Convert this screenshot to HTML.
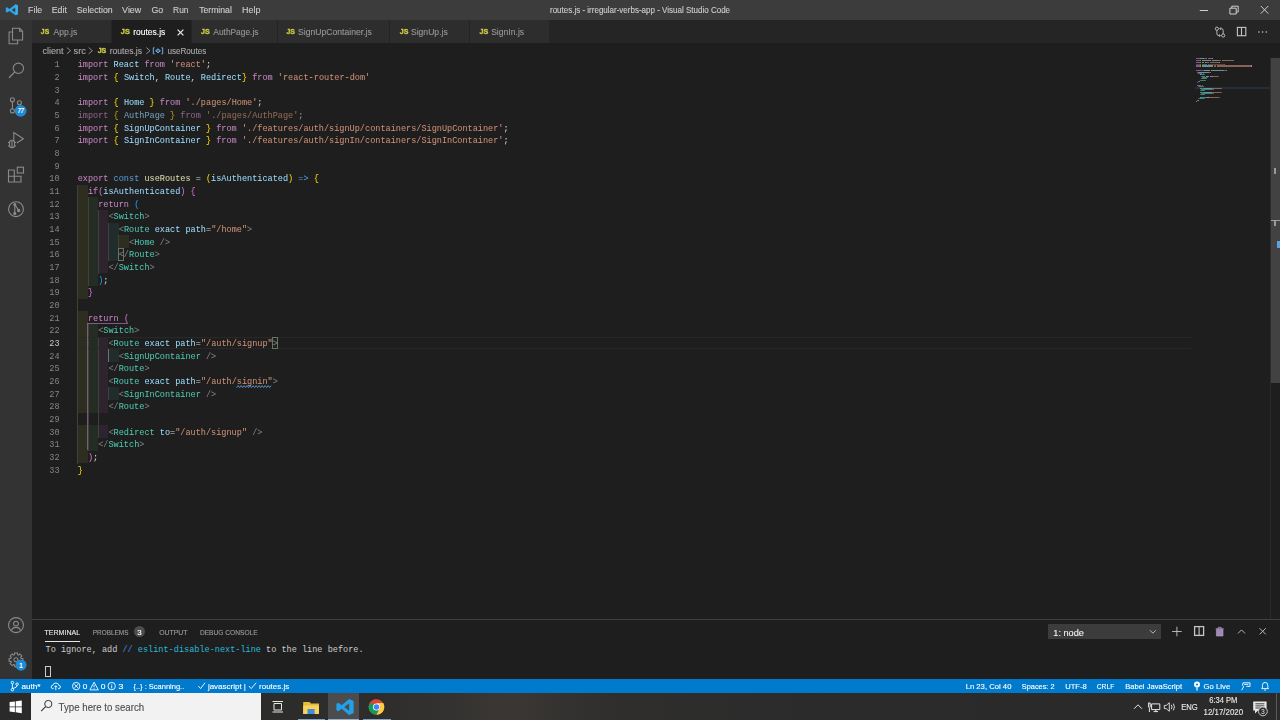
<!DOCTYPE html>
<html><head><meta charset="utf-8">
<style>
*{margin:0;padding:0;box-sizing:border-box}
html,body{width:1280px;height:720px;overflow:hidden;background:#1e1e1e;font-family:"Liberation Sans",sans-serif;position:relative}
.abs,.a{position:absolute}
#title{left:0;top:0;width:1280px;height:20px;background:#3c3c3c;color:#cccccc;font-size:8.7px}
#title .m{position:absolute;top:5px;line-height:10px}
#act{left:0;top:20px;width:32px;height:658.7px;background:#333333}
#tabs{left:32px;top:20px;width:1248px;height:23.3px;background:#252526}
.tab{position:absolute;top:0;height:23.3px;background:#2d2d2d;border-right:1px solid #252526;color:#8f8f8f;font-size:8.7px}
.tab.act{background:#1e1e1e;color:#ffffff}
.tab .js{position:absolute;top:7px;font-size:6.5px;font-weight:bold;color:#cbcb41;letter-spacing:-0.3px}
.tab .lb{position:absolute;top:6.5px;line-height:10px}
#crumbs{left:32px;top:43.3px;width:1248px;height:14.7px;background:#1e1e1e;color:#a9a9a9;font-size:8.7px}
.ln{position:absolute;left:32px;width:27.6px;text-align:right;color:#858585;font-family:"Liberation Mono",monospace;font-size:8.555px;line-height:12.667px;padding-top:1.3px}
.ln.cur{color:#c6c6c6}
.cl{-webkit-text-stroke:0.04px currentColor;position:absolute;left:77.7px;font-family:"Liberation Mono",monospace;font-size:8.555px;line-height:12.667px;white-space:pre;color:#d4d4d4;padding-top:1.3px}
.cl.dim{opacity:0.667}
.ig{position:absolute;width:1px;background:#404040}
.k{color:#C586C0}.s{color:#569CD6}.v{color:#9CDCFE}.f{color:#DCDCAA}.str{color:#CE9178}.p{color:#d4d4d4}.t{color:#4EC9B0}.g{color:#808080}
.b1{color:#FFD700}.b2{color:#DA70D6}.b3{color:#179FFF}
#panel{left:32px;top:619px;width:1248px;height:59.7px;background:#1e1e1e;border-top:1px solid #404040}
#status{left:0;top:678.7px;width:1280px;height:14.7px;background:#007acc;color:#fff;font-size:8.7px}
#taskbar{left:0;top:693.3px;width:1280px;height:26.7px;background:linear-gradient(90deg,#2a2a2a 0%,#2e2d2c 30%,#3a3734 40%,#2f2e2d 48%,#2b2b2b 65%,#2a2a2a 100%)}
.pt{top:627.5px;font-size:7.3px;line-height:9px;color:#9d9d9d;white-space:nowrap}
.term{font-family:"Liberation Mono",monospace;font-size:8.555px;line-height:12px;color:#cccccc;white-space:pre}
.st{top:681.3px;font-size:8.7px;line-height:10px;color:#ffffff;white-space:nowrap}
</style></head><body>
<div id="title" class="abs">
  <svg class="abs" style="left:0;top:0" width="1280" height="20" viewBox="0 0 1280 20">
    <path d="M15.5,4.3 L17.8,5.4 V14.2 L15.5,15.3 L9.4,10.9 L7.1,12.6 L5.8,12 V7.8 L7.1,7.2 L9.4,8.9 Z M15.5,7.4 L11.6,9.9 L15.5,12.4 Z" fill="#2ba6e8" fill-rule="evenodd"/>
    <path d="M15.5,4.3 L17.8,5.4 V14.2 L15.5,15.3 Z" fill="#3ab0f0"/>
    <path d="M1199.8,10.5 H1208" stroke="#cfcfcf" stroke-width="1"/>
    <path d="M1229.9,8.2 H1236.2 V14 H1229.9 Z M1231.8,8.2 V6.2 H1238.2 V12 H1236.2" fill="none" stroke="#cfcfcf" stroke-width="1"/>
    <path d="M1260.8,6 L1268.3,13.6 M1268.3,6 L1260.8,13.6" stroke="#cfcfcf" stroke-width="1"/>
  </svg>
</div>
<div id="act" class="abs"></div>
<svg class="abs" style="left:0;top:0" width="32" height="680" viewBox="0 0 32 680" fill="none" stroke="#8a8a8a" stroke-width="1.1">
  <!-- explorer -->
  <path d="M12.5,28.2 H19.6 L22.6,31.2 V40 H12.5 Z M19.6,28.2 V31.2 H22.6"/>
  <path d="M12.5,32 H9.1 V43.8 H17.6 V40"/>
  <!-- search -->
  <circle cx="18.4" cy="68.3" r="5.2"/>
  <path d="M14.6,72.1 L9,77.8" stroke-width="1.3"/>
  <!-- scm -->
  <circle cx="12.4" cy="99.8" r="2"/>
  <circle cx="19.4" cy="102.7" r="2"/>
  <circle cx="12.4" cy="110.9" r="2"/>
  <path d="M12.4,101.8 V108.9"/>
  <!-- debug -->
  <path d="M13.8,141 V132.6 L23.4,138.8 L16.8,143"/>
  <path d="M9.5,141.5 Q12,139 14.5,141.5 V146.5 Q12,149 9.5,146.5 Z M8,142.5 H9.5 M14.5,142.5 H16 M8,146 H9.5 M14.5,146 H16 M12,141 V148"/>
  <!-- extensions -->
  <path d="M8.5,170 H14.3 V176.3 H21 V182 H8.5 Z M8.5,176.3 H14.3 V182"/>
  <rect x="17.3" y="167.2" width="6.2" height="5.8"/>
  <!-- gitlens -->
  <circle cx="16" cy="209.2" r="7.4"/>
  <path d="M14.8,204.5 V213.4 M14.8,204.5 L18.7,210.5"/>
  <circle cx="14.8" cy="204.5" r="1" fill="#8a8a8a"/>
  <circle cx="18.7" cy="210.5" r="1.1" fill="#8a8a8a"/>
  <circle cx="14.8" cy="213.4" r="1" fill="#8a8a8a"/>
  <!-- account -->
  <circle cx="16" cy="625.1" r="7.5"/>
  <circle cx="16" cy="623.6" r="2.4"/>
  <path d="M11.6,630.4 Q12.3,627.4 16,627.4 Q19.7,627.4 20.4,630.4"/>
  <!-- gear -->
  <path d="M14.43,654.74 L14.61,652.94 L17.39,652.94 L17.57,654.74 L18.47,655.11 L19.87,653.97 L21.83,655.93 L20.69,657.33 L21.06,658.23 L22.86,658.41 L22.86,661.19 L21.06,661.37 L20.69,662.27 L21.83,663.67 L19.87,665.63 L18.47,664.49 L17.57,664.86 L17.39,666.66 L14.61,666.66 L14.43,664.86 L13.53,664.49 L12.13,665.63 L10.17,663.67 L11.31,662.27 L10.94,661.37 L9.14,661.19 L9.14,658.41 L10.94,658.23 L11.31,657.33 L10.17,655.93 L12.13,653.97 L13.53,655.11Z"/>
  <circle cx="16" cy="659.8" r="2"/>
  <!-- badges -->
  <circle cx="20.6" cy="110.8" r="5.9" fill="#1f8ad2" stroke="none"/>
  <circle cx="21" cy="665.1" r="5.6" fill="#1f8ad2" stroke="none"/>
  <text x="17.7" y="113.3" fill="#fff" stroke="none" font-family="Liberation Sans" font-size="6.6" font-weight="bold" font-style="italic" textLength="6.2" lengthAdjust="spacingAndGlyphs">77</text>
  <text x="21" y="667.6" fill="#fff" stroke="none" font-family="Liberation Sans" font-size="7" font-weight="bold" text-anchor="middle">1</text>
</svg>
<div id="tabs" class="abs">
  <div class="tab" style="left:0;width:80px"></div>
  <div class="tab act" style="left:80px;width:80px"><svg class="abs" style="left:65.2px;top:8.6px" width="7" height="7" viewBox="0 0 7 7"><path d="M0.6,0.6 L6.4,6.4 M6.4,0.6 L0.6,6.4" stroke="#e8e8e8" stroke-width="1.25"/></svg></div>
  <div class="tab" style="left:160px;width:85.5px"></div>
  <div class="tab" style="left:245.5px;width:112.5px"></div>
  <div class="tab" style="left:358px;width:80px"></div>
  <div class="tab" style="left:438px;width:80px"></div>
</div>
<div id="crumbs" class="abs"></div>
<svg class="abs" style="left:0;top:43px" width="300" height="15" viewBox="0 43 300 15" fill="none" stroke="#9a9a9a" stroke-width="0.9">
  <path d="M66.9,47.6 L70.6,50.7 L66.9,53.8 M88.7,47.6 L92.4,50.7 L88.7,53.8 M146.3,47.6 L150,50.7 L146.3,53.8"/>
  <path d="M154.6,47.8 H153.3 V53.8 H154.6 M161.4,47.8 H162.7 V53.8 H161.4" stroke="#75beff"/>
  <path d="M155.6,50.8 L158,48.8 L160.4,50.8 L158,52.8 Z" stroke="#75beff" fill="#75beff" fill-opacity="0.4"/>
</svg>
<svg class="abs" style="left:1200px;top:20px" width="80" height="23" viewBox="1200 20 80 23" fill="none" stroke="#c5c5c5" stroke-width="0.9">
  <circle cx="1216.9" cy="28.7" r="1.6"/>
  <circle cx="1223.2" cy="35.5" r="1.6"/>
  <path d="M1216.9,30.3 V33.6 Q1216.9,35.6 1218.9,35.6 H1220.4 M1219.2,34.4 L1220.4,35.6 L1219.2,36.8"/>
  <path d="M1223.2,33.9 V30.6 Q1223.2,28.6 1221.2,28.6 H1219.8 M1221,27.4 L1219.8,28.6 L1221,29.8"/>
  <rect x="1237.4" y="27.4" width="8.4" height="8.3" stroke-width="1.1"/>
  <path d="M1241.5,27.4 V35.7" stroke-width="1.1"/>
  <circle cx="1258.9" cy="32" r="0.8" fill="#c5c5c5" stroke="none"/>
  <circle cx="1262.6" cy="32" r="0.8" fill="#c5c5c5" stroke="none"/>
  <circle cx="1266.3" cy="32" r="0.8" fill="#c5c5c5" stroke="none"/>
</svg>
<div class="a" style="left:77.70px;top:184.67px;width:10.27px;height:12.67px;background:rgba(255,255,64,0.07)"></div>
<div class="a" style="left:77.70px;top:197.33px;width:10.27px;height:12.67px;background:rgba(255,255,64,0.07)"></div>
<div class="a" style="left:87.97px;top:197.33px;width:10.27px;height:12.67px;background:rgba(127,255,127,0.07)"></div>
<div class="a" style="left:77.70px;top:210.00px;width:10.27px;height:12.67px;background:rgba(255,255,64,0.07)"></div>
<div class="a" style="left:87.97px;top:210.00px;width:10.27px;height:12.67px;background:rgba(127,255,127,0.07)"></div>
<div class="a" style="left:98.23px;top:210.00px;width:10.27px;height:12.67px;background:rgba(255,127,255,0.07)"></div>
<div class="a" style="left:77.70px;top:222.67px;width:10.27px;height:12.67px;background:rgba(255,255,64,0.07)"></div>
<div class="a" style="left:87.97px;top:222.67px;width:10.27px;height:12.67px;background:rgba(127,255,127,0.07)"></div>
<div class="a" style="left:98.23px;top:222.67px;width:10.27px;height:12.67px;background:rgba(255,127,255,0.07)"></div>
<div class="a" style="left:108.50px;top:222.67px;width:10.27px;height:12.67px;background:rgba(79,236,236,0.07)"></div>
<div class="a" style="left:77.70px;top:235.33px;width:10.27px;height:12.67px;background:rgba(255,255,64,0.07)"></div>
<div class="a" style="left:87.97px;top:235.33px;width:10.27px;height:12.67px;background:rgba(127,255,127,0.07)"></div>
<div class="a" style="left:98.23px;top:235.33px;width:10.27px;height:12.67px;background:rgba(255,127,255,0.07)"></div>
<div class="a" style="left:108.50px;top:235.33px;width:10.27px;height:12.67px;background:rgba(79,236,236,0.07)"></div>
<div class="a" style="left:118.77px;top:235.33px;width:10.27px;height:12.67px;background:rgba(255,255,64,0.07)"></div>
<div class="a" style="left:77.70px;top:248.00px;width:10.27px;height:12.67px;background:rgba(255,255,64,0.07)"></div>
<div class="a" style="left:87.97px;top:248.00px;width:10.27px;height:12.67px;background:rgba(127,255,127,0.07)"></div>
<div class="a" style="left:98.23px;top:248.00px;width:10.27px;height:12.67px;background:rgba(255,127,255,0.07)"></div>
<div class="a" style="left:108.50px;top:248.00px;width:10.27px;height:12.67px;background:rgba(79,236,236,0.07)"></div>
<div class="a" style="left:77.70px;top:260.67px;width:10.27px;height:12.67px;background:rgba(255,255,64,0.07)"></div>
<div class="a" style="left:87.97px;top:260.67px;width:10.27px;height:12.67px;background:rgba(127,255,127,0.07)"></div>
<div class="a" style="left:98.23px;top:260.67px;width:10.27px;height:12.67px;background:rgba(255,127,255,0.07)"></div>
<div class="a" style="left:77.70px;top:273.33px;width:10.27px;height:12.67px;background:rgba(255,255,64,0.07)"></div>
<div class="a" style="left:87.97px;top:273.33px;width:10.27px;height:12.67px;background:rgba(127,255,127,0.07)"></div>
<div class="a" style="left:77.70px;top:286.00px;width:10.27px;height:12.67px;background:rgba(255,255,64,0.07)"></div>
<div class="a" style="left:77.70px;top:311.33px;width:10.27px;height:12.67px;background:rgba(255,255,64,0.07)"></div>
<div class="a" style="left:77.70px;top:324.00px;width:10.27px;height:12.67px;background:rgba(255,255,64,0.07)"></div>
<div class="a" style="left:87.97px;top:324.00px;width:10.27px;height:12.67px;background:rgba(127,255,127,0.07)"></div>
<div class="a" style="left:77.70px;top:336.67px;width:10.27px;height:12.67px;background:rgba(255,255,64,0.07)"></div>
<div class="a" style="left:87.97px;top:336.67px;width:10.27px;height:12.67px;background:rgba(127,255,127,0.07)"></div>
<div class="a" style="left:98.23px;top:336.67px;width:10.27px;height:12.67px;background:rgba(255,127,255,0.07)"></div>
<div class="a" style="left:77.70px;top:349.33px;width:10.27px;height:12.67px;background:rgba(255,255,64,0.07)"></div>
<div class="a" style="left:87.97px;top:349.33px;width:10.27px;height:12.67px;background:rgba(127,255,127,0.07)"></div>
<div class="a" style="left:98.23px;top:349.33px;width:10.27px;height:12.67px;background:rgba(255,127,255,0.07)"></div>
<div class="a" style="left:108.50px;top:349.33px;width:10.27px;height:12.67px;background:rgba(79,236,236,0.07)"></div>
<div class="a" style="left:77.70px;top:362.00px;width:10.27px;height:12.67px;background:rgba(255,255,64,0.07)"></div>
<div class="a" style="left:87.97px;top:362.00px;width:10.27px;height:12.67px;background:rgba(127,255,127,0.07)"></div>
<div class="a" style="left:98.23px;top:362.00px;width:10.27px;height:12.67px;background:rgba(255,127,255,0.07)"></div>
<div class="a" style="left:77.70px;top:374.67px;width:10.27px;height:12.67px;background:rgba(255,255,64,0.07)"></div>
<div class="a" style="left:87.97px;top:374.67px;width:10.27px;height:12.67px;background:rgba(127,255,127,0.07)"></div>
<div class="a" style="left:98.23px;top:374.67px;width:10.27px;height:12.67px;background:rgba(255,127,255,0.07)"></div>
<div class="a" style="left:77.70px;top:387.33px;width:10.27px;height:12.67px;background:rgba(255,255,64,0.07)"></div>
<div class="a" style="left:87.97px;top:387.33px;width:10.27px;height:12.67px;background:rgba(127,255,127,0.07)"></div>
<div class="a" style="left:98.23px;top:387.33px;width:10.27px;height:12.67px;background:rgba(255,127,255,0.07)"></div>
<div class="a" style="left:108.50px;top:387.33px;width:10.27px;height:12.67px;background:rgba(79,236,236,0.07)"></div>
<div class="a" style="left:77.70px;top:400.00px;width:10.27px;height:12.67px;background:rgba(255,255,64,0.07)"></div>
<div class="a" style="left:87.97px;top:400.00px;width:10.27px;height:12.67px;background:rgba(127,255,127,0.07)"></div>
<div class="a" style="left:98.23px;top:400.00px;width:10.27px;height:12.67px;background:rgba(255,127,255,0.07)"></div>
<div class="a" style="left:77.70px;top:425.33px;width:10.27px;height:12.67px;background:rgba(255,255,64,0.07)"></div>
<div class="a" style="left:87.97px;top:425.33px;width:10.27px;height:12.67px;background:rgba(127,255,127,0.07)"></div>
<div class="a" style="left:98.23px;top:425.33px;width:10.27px;height:12.67px;background:rgba(255,127,255,0.07)"></div>
<div class="a" style="left:77.70px;top:438.00px;width:10.27px;height:12.67px;background:rgba(255,255,64,0.07)"></div>
<div class="a" style="left:87.97px;top:438.00px;width:10.27px;height:12.67px;background:rgba(127,255,127,0.07)"></div>
<div class="a" style="left:77.70px;top:450.67px;width:10.27px;height:12.67px;background:rgba(255,255,64,0.07)"></div>
<div class="ig" style="left:77.40px;top:184.67px;height:12.87px"></div>
<div class="ig" style="left:77.40px;top:197.33px;height:12.87px"></div>
<div class="ig" style="left:87.67px;top:197.33px;height:12.87px"></div>
<div class="ig" style="left:77.40px;top:210.00px;height:12.87px"></div>
<div class="ig" style="left:87.67px;top:210.00px;height:12.87px"></div>
<div class="ig" style="left:97.93px;top:210.00px;height:12.87px"></div>
<div class="ig" style="left:77.40px;top:222.67px;height:12.87px"></div>
<div class="ig" style="left:87.67px;top:222.67px;height:12.87px"></div>
<div class="ig" style="left:97.93px;top:222.67px;height:12.87px"></div>
<div class="ig" style="left:108.20px;top:222.67px;height:12.87px"></div>
<div class="ig" style="left:77.40px;top:235.33px;height:12.87px"></div>
<div class="ig" style="left:87.67px;top:235.33px;height:12.87px"></div>
<div class="ig" style="left:97.93px;top:235.33px;height:12.87px"></div>
<div class="ig" style="left:108.20px;top:235.33px;height:12.87px"></div>
<div class="ig" style="left:118.47px;top:235.33px;height:12.87px"></div>
<div class="ig" style="left:77.40px;top:248.00px;height:12.87px"></div>
<div class="ig" style="left:87.67px;top:248.00px;height:12.87px"></div>
<div class="ig" style="left:97.93px;top:248.00px;height:12.87px"></div>
<div class="ig" style="left:108.20px;top:248.00px;height:12.87px"></div>
<div class="ig" style="left:77.40px;top:260.67px;height:12.87px"></div>
<div class="ig" style="left:87.67px;top:260.67px;height:12.87px"></div>
<div class="ig" style="left:97.93px;top:260.67px;height:12.87px"></div>
<div class="ig" style="left:77.40px;top:273.33px;height:12.87px"></div>
<div class="ig" style="left:87.67px;top:273.33px;height:12.87px"></div>
<div class="ig" style="left:77.40px;top:286.00px;height:12.87px"></div>
<div class="ig" style="left:77.40px;top:298.67px;height:12.87px"></div>
<div class="ig" style="left:77.40px;top:311.33px;height:12.87px"></div>
<div class="ig" style="left:77.40px;top:324.00px;height:12.87px"></div>
<div class="ig" style="left:87.67px;top:324.00px;height:12.87px"></div>
<div class="ig" style="left:77.40px;top:336.67px;height:12.87px"></div>
<div class="ig" style="left:87.67px;top:336.67px;height:12.87px"></div>
<div class="ig" style="left:97.93px;top:336.67px;height:12.87px"></div>
<div class="ig" style="left:77.40px;top:349.33px;height:12.87px"></div>
<div class="ig" style="left:87.67px;top:349.33px;height:12.87px"></div>
<div class="ig" style="left:97.93px;top:349.33px;height:12.87px"></div>
<div class="ig" style="left:108.20px;top:349.33px;height:12.87px;background:#707070"></div>
<div class="ig" style="left:77.40px;top:362.00px;height:12.87px"></div>
<div class="ig" style="left:87.67px;top:362.00px;height:12.87px"></div>
<div class="ig" style="left:97.93px;top:362.00px;height:12.87px"></div>
<div class="ig" style="left:77.40px;top:374.67px;height:12.87px"></div>
<div class="ig" style="left:87.67px;top:374.67px;height:12.87px"></div>
<div class="ig" style="left:97.93px;top:374.67px;height:12.87px"></div>
<div class="ig" style="left:77.40px;top:387.33px;height:12.87px"></div>
<div class="ig" style="left:87.67px;top:387.33px;height:12.87px"></div>
<div class="ig" style="left:97.93px;top:387.33px;height:12.87px"></div>
<div class="ig" style="left:108.20px;top:387.33px;height:12.87px"></div>
<div class="ig" style="left:77.40px;top:400.00px;height:12.87px"></div>
<div class="ig" style="left:87.67px;top:400.00px;height:12.87px"></div>
<div class="ig" style="left:97.93px;top:400.00px;height:12.87px"></div>
<div class="ig" style="left:77.40px;top:412.67px;height:12.87px"></div>
<div class="ig" style="left:87.67px;top:412.67px;height:12.87px"></div>
<div class="ig" style="left:97.93px;top:412.67px;height:12.87px"></div>
<div class="ig" style="left:77.40px;top:425.33px;height:12.87px"></div>
<div class="ig" style="left:87.67px;top:425.33px;height:12.87px"></div>
<div class="ig" style="left:97.93px;top:425.33px;height:12.87px"></div>
<div class="ig" style="left:77.40px;top:438.00px;height:12.87px"></div>
<div class="ig" style="left:87.67px;top:438.00px;height:12.87px"></div>
<div class="ig" style="left:77.40px;top:450.67px;height:12.87px"></div>
<!-- current line border -->
<div class="abs" style="left:77.7px;top:336.7px;width:1113px;height:12.67px;border-top:1px solid #282828;border-bottom:1px solid #282828"></div>
<!-- bracket scope -->
<div class="abs" style="left:87.4px;top:323.2px;width:41px;height:1px;background:#b070b0;opacity:0.7"></div>
<div class="abs" style="left:87.1px;top:323.2px;width:1px;height:127px;background:#8a6a8a;opacity:0.8"></div>
<!-- bracket match boxes -->
<div class="abs" style="left:118.3px;top:248.3px;width:5.9px;height:12.4px;border:1px solid #6e6e6e;background:rgba(0,100,0,0.1)"></div>
<div class="abs" style="left:272.4px;top:336.9px;width:5.9px;height:12.4px;border:1px solid #6e6e6e;background:rgba(0,100,0,0.1)"></div>
<svg class="abs" style="left:230px;top:380px" width="50" height="12" viewBox="230 380 50 12"><path d="M236.6,387.6 L238.1,385.6 L239.6,387.6 L241.1,385.6 L242.6,387.6 L244.1,385.6 L245.6,387.6 L247.1,385.6 L248.6,387.6 L250.1,385.6 L251.6,387.6 L253.1,385.6 L254.6,387.6 L256.1,385.6 L257.6,387.6 L259.1,385.6 L260.6,387.6 L262.1,385.6 L263.6,387.6 L265.1,385.6 L266.6,387.6 L268.1,385.6 L269.6,387.6 L271.1,385.6" fill="none" stroke="#5d9ad6" stroke-width="0.9"/></svg>
<!-- minimap -->
<div class="a" style="left:0;top:0;width:1280px;height:120px;filter:blur(0.6px)"><div class="a" style="left:1194.80px;top:87.33px;width:75.20px;height:1.33px;background:rgba(50,80,110,0.35)"></div>
<div class="a" style="left:1195.80px;top:58.20px;width:4.00px;height:1px;background:#C586C0;opacity:0.6"></div>
<div class="a" style="left:1200.47px;top:58.20px;width:3.33px;height:1px;background:#9CDCFE;opacity:0.6"></div>
<div class="a" style="left:1204.47px;top:58.20px;width:2.67px;height:1px;background:#C586C0;opacity:0.6"></div>
<div class="a" style="left:1207.80px;top:58.20px;width:4.67px;height:1px;background:#CE9178;opacity:0.6"></div>
<div class="a" style="left:1212.47px;top:58.20px;width:0.67px;height:1px;background:#d4d4d4;opacity:0.6"></div>
<div class="a" style="left:1195.80px;top:59.53px;width:4.00px;height:1px;background:#C586C0;opacity:0.6"></div>
<div class="a" style="left:1200.47px;top:59.53px;width:0.67px;height:1px;background:#FFD700;opacity:0.6"></div>
<div class="a" style="left:1201.80px;top:59.53px;width:4.00px;height:1px;background:#9CDCFE;opacity:0.6"></div>
<div class="a" style="left:1205.80px;top:59.53px;width:0.67px;height:1px;background:#d4d4d4;opacity:0.6"></div>
<div class="a" style="left:1207.13px;top:59.53px;width:3.33px;height:1px;background:#9CDCFE;opacity:0.6"></div>
<div class="a" style="left:1210.47px;top:59.53px;width:0.67px;height:1px;background:#d4d4d4;opacity:0.6"></div>
<div class="a" style="left:1211.80px;top:59.53px;width:5.33px;height:1px;background:#9CDCFE;opacity:0.6"></div>
<div class="a" style="left:1217.13px;top:59.53px;width:0.67px;height:1px;background:#FFD700;opacity:0.6"></div>
<div class="a" style="left:1218.47px;top:59.53px;width:2.67px;height:1px;background:#C586C0;opacity:0.6"></div>
<div class="a" style="left:1221.80px;top:59.53px;width:12.00px;height:1px;background:#CE9178;opacity:0.6"></div>
<div class="a" style="left:1195.80px;top:62.20px;width:4.00px;height:1px;background:#C586C0;opacity:0.6"></div>
<div class="a" style="left:1200.47px;top:62.20px;width:0.67px;height:1px;background:#FFD700;opacity:0.6"></div>
<div class="a" style="left:1201.80px;top:62.20px;width:2.67px;height:1px;background:#9CDCFE;opacity:0.6"></div>
<div class="a" style="left:1205.13px;top:62.20px;width:0.67px;height:1px;background:#FFD700;opacity:0.6"></div>
<div class="a" style="left:1206.47px;top:62.20px;width:2.67px;height:1px;background:#C586C0;opacity:0.6"></div>
<div class="a" style="left:1209.80px;top:62.20px;width:9.33px;height:1px;background:#CE9178;opacity:0.6"></div>
<div class="a" style="left:1219.13px;top:62.20px;width:0.67px;height:1px;background:#d4d4d4;opacity:0.6"></div>
<div class="a" style="left:1195.80px;top:63.53px;width:4.00px;height:1px;background:#C586C0;opacity:0.35"></div>
<div class="a" style="left:1200.47px;top:63.53px;width:0.67px;height:1px;background:#FFD700;opacity:0.35"></div>
<div class="a" style="left:1201.80px;top:63.53px;width:5.33px;height:1px;background:#9CDCFE;opacity:0.35"></div>
<div class="a" style="left:1207.80px;top:63.53px;width:0.67px;height:1px;background:#FFD700;opacity:0.35"></div>
<div class="a" style="left:1209.13px;top:63.53px;width:2.67px;height:1px;background:#C586C0;opacity:0.35"></div>
<div class="a" style="left:1212.47px;top:63.53px;width:12.00px;height:1px;background:#CE9178;opacity:0.35"></div>
<div class="a" style="left:1224.47px;top:63.53px;width:0.67px;height:1px;background:#d4d4d4;opacity:0.35"></div>
<div class="a" style="left:1195.80px;top:64.87px;width:4.00px;height:1px;background:#C586C0;opacity:0.6"></div>
<div class="a" style="left:1200.47px;top:64.87px;width:0.67px;height:1px;background:#FFD700;opacity:0.6"></div>
<div class="a" style="left:1201.80px;top:64.87px;width:10.00px;height:1px;background:#9CDCFE;opacity:0.6"></div>
<div class="a" style="left:1212.47px;top:64.87px;width:0.67px;height:1px;background:#FFD700;opacity:0.6"></div>
<div class="a" style="left:1213.80px;top:64.87px;width:2.67px;height:1px;background:#C586C0;opacity:0.6"></div>
<div class="a" style="left:1217.13px;top:64.87px;width:34.00px;height:1px;background:#CE9178;opacity:0.6"></div>
<div class="a" style="left:1251.14px;top:64.87px;width:0.67px;height:1px;background:#d4d4d4;opacity:0.6"></div>
<div class="a" style="left:1195.80px;top:66.20px;width:4.00px;height:1px;background:#C586C0;opacity:0.6"></div>
<div class="a" style="left:1200.47px;top:66.20px;width:0.67px;height:1px;background:#FFD700;opacity:0.6"></div>
<div class="a" style="left:1201.80px;top:66.20px;width:10.00px;height:1px;background:#9CDCFE;opacity:0.6"></div>
<div class="a" style="left:1212.47px;top:66.20px;width:0.67px;height:1px;background:#FFD700;opacity:0.6"></div>
<div class="a" style="left:1213.80px;top:66.20px;width:2.67px;height:1px;background:#C586C0;opacity:0.6"></div>
<div class="a" style="left:1217.13px;top:66.20px;width:34.00px;height:1px;background:#CE9178;opacity:0.6"></div>
<div class="a" style="left:1251.14px;top:66.20px;width:0.67px;height:1px;background:#d4d4d4;opacity:0.6"></div>
<div class="a" style="left:1195.80px;top:70.20px;width:4.00px;height:1px;background:#C586C0;opacity:0.6"></div>
<div class="a" style="left:1200.47px;top:70.20px;width:3.33px;height:1px;background:#569CD6;opacity:0.6"></div>
<div class="a" style="left:1204.47px;top:70.20px;width:6.00px;height:1px;background:#DCDCAA;opacity:0.6"></div>
<div class="a" style="left:1211.13px;top:70.20px;width:0.67px;height:1px;background:#d4d4d4;opacity:0.6"></div>
<div class="a" style="left:1212.47px;top:70.20px;width:0.67px;height:1px;background:#FFD700;opacity:0.6"></div>
<div class="a" style="left:1213.13px;top:70.20px;width:10.00px;height:1px;background:#9CDCFE;opacity:0.6"></div>
<div class="a" style="left:1223.13px;top:70.20px;width:0.67px;height:1px;background:#FFD700;opacity:0.6"></div>
<div class="a" style="left:1224.47px;top:70.20px;width:1.33px;height:1px;background:#569CD6;opacity:0.6"></div>
<div class="a" style="left:1226.47px;top:70.20px;width:0.67px;height:1px;background:#FFD700;opacity:0.6"></div>
<div class="a" style="left:1197.13px;top:71.53px;width:1.33px;height:1px;background:#C586C0;opacity:0.6"></div>
<div class="a" style="left:1198.47px;top:71.53px;width:0.67px;height:1px;background:#DA70D6;opacity:0.6"></div>
<div class="a" style="left:1199.13px;top:71.53px;width:10.00px;height:1px;background:#9CDCFE;opacity:0.6"></div>
<div class="a" style="left:1209.13px;top:71.53px;width:0.67px;height:1px;background:#DA70D6;opacity:0.6"></div>
<div class="a" style="left:1210.47px;top:71.53px;width:0.67px;height:1px;background:#DA70D6;opacity:0.6"></div>
<div class="a" style="left:1198.47px;top:72.87px;width:4.00px;height:1px;background:#C586C0;opacity:0.6"></div>
<div class="a" style="left:1203.13px;top:72.87px;width:0.67px;height:1px;background:#179FFF;opacity:0.6"></div>
<div class="a" style="left:1199.80px;top:74.20px;width:0.67px;height:1px;background:#808080;opacity:0.6"></div>
<div class="a" style="left:1200.47px;top:74.20px;width:4.00px;height:1px;background:#4EC9B0;opacity:0.6"></div>
<div class="a" style="left:1204.47px;top:74.20px;width:0.67px;height:1px;background:#808080;opacity:0.6"></div>
<div class="a" style="left:1201.13px;top:75.53px;width:0.67px;height:1px;background:#808080;opacity:0.6"></div>
<div class="a" style="left:1201.80px;top:75.53px;width:3.33px;height:1px;background:#4EC9B0;opacity:0.6"></div>
<div class="a" style="left:1205.80px;top:75.53px;width:3.33px;height:1px;background:#9CDCFE;opacity:0.6"></div>
<div class="a" style="left:1209.80px;top:75.53px;width:2.67px;height:1px;background:#9CDCFE;opacity:0.6"></div>
<div class="a" style="left:1212.47px;top:75.53px;width:0.67px;height:1px;background:#d4d4d4;opacity:0.6"></div>
<div class="a" style="left:1213.13px;top:75.53px;width:4.67px;height:1px;background:#CE9178;opacity:0.6"></div>
<div class="a" style="left:1217.80px;top:75.53px;width:0.67px;height:1px;background:#808080;opacity:0.6"></div>
<div class="a" style="left:1202.47px;top:76.87px;width:0.67px;height:1px;background:#808080;opacity:0.6"></div>
<div class="a" style="left:1203.13px;top:76.87px;width:2.67px;height:1px;background:#4EC9B0;opacity:0.6"></div>
<div class="a" style="left:1206.47px;top:76.87px;width:1.33px;height:1px;background:#808080;opacity:0.6"></div>
<div class="a" style="left:1201.13px;top:78.20px;width:1.33px;height:1px;background:#808080;opacity:0.6"></div>
<div class="a" style="left:1202.47px;top:78.20px;width:3.33px;height:1px;background:#4EC9B0;opacity:0.6"></div>
<div class="a" style="left:1205.80px;top:78.20px;width:0.67px;height:1px;background:#808080;opacity:0.6"></div>
<div class="a" style="left:1199.80px;top:79.53px;width:1.33px;height:1px;background:#808080;opacity:0.6"></div>
<div class="a" style="left:1201.13px;top:79.53px;width:4.00px;height:1px;background:#4EC9B0;opacity:0.6"></div>
<div class="a" style="left:1205.13px;top:79.53px;width:0.67px;height:1px;background:#808080;opacity:0.6"></div>
<div class="a" style="left:1198.47px;top:80.87px;width:0.67px;height:1px;background:#179FFF;opacity:0.6"></div>
<div class="a" style="left:1199.13px;top:80.87px;width:0.67px;height:1px;background:#d4d4d4;opacity:0.6"></div>
<div class="a" style="left:1197.13px;top:82.20px;width:0.67px;height:1px;background:#DA70D6;opacity:0.6"></div>
<div class="a" style="left:1197.13px;top:84.87px;width:4.00px;height:1px;background:#C586C0;opacity:0.6"></div>
<div class="a" style="left:1201.80px;top:84.87px;width:0.67px;height:1px;background:#DA70D6;opacity:0.6"></div>
<div class="a" style="left:1198.47px;top:86.20px;width:0.67px;height:1px;background:#808080;opacity:0.6"></div>
<div class="a" style="left:1199.13px;top:86.20px;width:4.00px;height:1px;background:#4EC9B0;opacity:0.6"></div>
<div class="a" style="left:1203.13px;top:86.20px;width:0.67px;height:1px;background:#808080;opacity:0.6"></div>
<div class="a" style="left:1199.80px;top:87.53px;width:0.67px;height:1px;background:#808080;opacity:0.6"></div>
<div class="a" style="left:1200.47px;top:87.53px;width:3.33px;height:1px;background:#4EC9B0;opacity:0.6"></div>
<div class="a" style="left:1204.47px;top:87.53px;width:3.33px;height:1px;background:#9CDCFE;opacity:0.6"></div>
<div class="a" style="left:1208.47px;top:87.53px;width:2.67px;height:1px;background:#9CDCFE;opacity:0.6"></div>
<div class="a" style="left:1211.13px;top:87.53px;width:0.67px;height:1px;background:#d4d4d4;opacity:0.6"></div>
<div class="a" style="left:1211.80px;top:87.53px;width:9.33px;height:1px;background:#CE9178;opacity:0.6"></div>
<div class="a" style="left:1221.13px;top:87.53px;width:0.67px;height:1px;background:#808080;opacity:0.6"></div>
<div class="a" style="left:1201.13px;top:88.87px;width:0.67px;height:1px;background:#808080;opacity:0.6"></div>
<div class="a" style="left:1201.80px;top:88.87px;width:10.00px;height:1px;background:#4EC9B0;opacity:0.6"></div>
<div class="a" style="left:1212.47px;top:88.87px;width:1.33px;height:1px;background:#808080;opacity:0.6"></div>
<div class="a" style="left:1199.80px;top:90.20px;width:1.33px;height:1px;background:#808080;opacity:0.6"></div>
<div class="a" style="left:1201.13px;top:90.20px;width:3.33px;height:1px;background:#4EC9B0;opacity:0.6"></div>
<div class="a" style="left:1204.47px;top:90.20px;width:0.67px;height:1px;background:#808080;opacity:0.6"></div>
<div class="a" style="left:1199.80px;top:91.53px;width:0.67px;height:1px;background:#808080;opacity:0.6"></div>
<div class="a" style="left:1200.47px;top:91.53px;width:3.33px;height:1px;background:#4EC9B0;opacity:0.6"></div>
<div class="a" style="left:1204.47px;top:91.53px;width:3.33px;height:1px;background:#9CDCFE;opacity:0.6"></div>
<div class="a" style="left:1208.47px;top:91.53px;width:2.67px;height:1px;background:#9CDCFE;opacity:0.6"></div>
<div class="a" style="left:1211.13px;top:91.53px;width:0.67px;height:1px;background:#d4d4d4;opacity:0.6"></div>
<div class="a" style="left:1211.80px;top:91.53px;width:9.33px;height:1px;background:#CE9178;opacity:0.6"></div>
<div class="a" style="left:1221.13px;top:91.53px;width:0.67px;height:1px;background:#808080;opacity:0.6"></div>
<div class="a" style="left:1201.13px;top:92.87px;width:0.67px;height:1px;background:#808080;opacity:0.6"></div>
<div class="a" style="left:1201.80px;top:92.87px;width:10.00px;height:1px;background:#4EC9B0;opacity:0.6"></div>
<div class="a" style="left:1212.47px;top:92.87px;width:1.33px;height:1px;background:#808080;opacity:0.6"></div>
<div class="a" style="left:1199.80px;top:94.20px;width:1.33px;height:1px;background:#808080;opacity:0.6"></div>
<div class="a" style="left:1201.13px;top:94.20px;width:3.33px;height:1px;background:#4EC9B0;opacity:0.6"></div>
<div class="a" style="left:1204.47px;top:94.20px;width:0.67px;height:1px;background:#808080;opacity:0.6"></div>
<div class="a" style="left:1199.80px;top:96.87px;width:0.67px;height:1px;background:#808080;opacity:0.6"></div>
<div class="a" style="left:1200.47px;top:96.87px;width:5.33px;height:1px;background:#4EC9B0;opacity:0.6"></div>
<div class="a" style="left:1206.47px;top:96.87px;width:1.33px;height:1px;background:#9CDCFE;opacity:0.6"></div>
<div class="a" style="left:1207.80px;top:96.87px;width:0.67px;height:1px;background:#d4d4d4;opacity:0.6"></div>
<div class="a" style="left:1208.47px;top:96.87px;width:9.33px;height:1px;background:#CE9178;opacity:0.6"></div>
<div class="a" style="left:1218.47px;top:96.87px;width:1.33px;height:1px;background:#808080;opacity:0.6"></div>
<div class="a" style="left:1198.47px;top:98.20px;width:1.33px;height:1px;background:#808080;opacity:0.6"></div>
<div class="a" style="left:1199.80px;top:98.20px;width:4.00px;height:1px;background:#4EC9B0;opacity:0.6"></div>
<div class="a" style="left:1203.80px;top:98.20px;width:0.67px;height:1px;background:#808080;opacity:0.6"></div>
<div class="a" style="left:1197.13px;top:99.53px;width:0.67px;height:1px;background:#DA70D6;opacity:0.6"></div>
<div class="a" style="left:1197.80px;top:99.53px;width:0.67px;height:1px;background:#d4d4d4;opacity:0.6"></div>
<div class="a" style="left:1195.80px;top:100.87px;width:0.67px;height:1px;background:#FFD700;opacity:0.6"></div></div>
<!-- scrollbar -->
<div class="abs" style="left:1270px;top:58px;width:1px;height:561px;background:rgba(127,127,127,0.15)"></div>
<div class="abs" style="left:1271px;top:58px;width:9px;height:325px;background:rgba(121,121,121,0.4)"></div>
<div class="abs" style="left:1274px;top:168px;width:2px;height:6px;background:#9a9a9a"></div>
<div class="abs" style="left:1271px;top:219.5px;width:9px;height:1.5px;background:#a0a0a0"></div>
<div class="abs" style="left:1274px;top:220px;width:2px;height:6px;background:#9a9a9a"></div>
<div class="abs" style="left:1277px;top:241px;width:3px;height:7px;background:#5f9fe0"></div>
<div class="a" style="left:0;top:0;width:1280px;height:620px;will-change:transform"><div class="ln" style="top:58.00px">1</div>
<div class="ln" style="top:70.67px">2</div>
<div class="ln" style="top:83.33px">3</div>
<div class="ln" style="top:96.00px">4</div>
<div class="ln" style="top:108.67px">5</div>
<div class="ln" style="top:121.33px">6</div>
<div class="ln" style="top:134.00px">7</div>
<div class="ln" style="top:146.67px">8</div>
<div class="ln" style="top:159.33px">9</div>
<div class="ln" style="top:172.00px">10</div>
<div class="ln" style="top:184.67px">11</div>
<div class="ln" style="top:197.33px">12</div>
<div class="ln" style="top:210.00px">13</div>
<div class="ln" style="top:222.67px">14</div>
<div class="ln" style="top:235.33px">15</div>
<div class="ln" style="top:248.00px">16</div>
<div class="ln" style="top:260.67px">17</div>
<div class="ln" style="top:273.33px">18</div>
<div class="ln" style="top:286.00px">19</div>
<div class="ln" style="top:298.67px">20</div>
<div class="ln" style="top:311.33px">21</div>
<div class="ln" style="top:324.00px">22</div>
<div class="ln cur" style="top:336.67px">23</div>
<div class="ln" style="top:349.33px">24</div>
<div class="ln" style="top:362.00px">25</div>
<div class="ln" style="top:374.67px">26</div>
<div class="ln" style="top:387.33px">27</div>
<div class="ln" style="top:400.00px">28</div>
<div class="ln" style="top:412.67px">29</div>
<div class="ln" style="top:425.33px">30</div>
<div class="ln" style="top:438.00px">31</div>
<div class="ln" style="top:450.67px">32</div>
<div class="ln" style="top:463.33px">33</div>
<div class="cl" style="top:58.00px"><span class="k">import</span><span class="p"> </span><span class="v">React</span><span class="p"> </span><span class="k">from</span><span class="p"> </span><span class="str">'react'</span><span class="p">;</span></div>
<div class="cl" style="top:70.67px"><span class="k">import</span><span class="p"> </span><span class="b1">{</span><span class="v"> Switch</span><span class="p">, </span><span class="v">Route</span><span class="p">, </span><span class="v">Redirect</span><span class="b1">}</span><span class="p"> </span><span class="k">from</span><span class="p"> </span><span class="str">'react-router-dom'</span></div>
<div class="cl" style="top:96.00px"><span class="k">import</span><span class="p"> </span><span class="b1">{</span><span class="v"> Home </span><span class="b1">}</span><span class="p"> </span><span class="k">from</span><span class="p"> </span><span class="str">'./pages/Home'</span><span class="p">;</span></div>
<div class="cl dim" style="top:108.67px"><span class="k">import</span><span class="p"> </span><span class="b1">{</span><span class="v"> AuthPage </span><span class="b1">}</span><span class="p"> </span><span class="k">from</span><span class="p"> </span><span class="str">'./pages/AuthPage'</span><span class="p">;</span></div>
<div class="cl" style="top:121.33px"><span class="k">import</span><span class="p"> </span><span class="b1">{</span><span class="v"> SignUpContainer </span><span class="b1">}</span><span class="p"> </span><span class="k">from</span><span class="p"> </span><span class="str">'./features/auth/signUp/containers/SignUpContainer'</span><span class="p">;</span></div>
<div class="cl" style="top:134.00px"><span class="k">import</span><span class="p"> </span><span class="b1">{</span><span class="v"> SignInContainer </span><span class="b1">}</span><span class="p"> </span><span class="k">from</span><span class="p"> </span><span class="str">'./features/auth/signIn/containers/SignInContainer'</span><span class="p">;</span></div>
<div class="cl" style="top:172.00px"><span class="k">export</span><span class="p"> </span><span class="s">const</span><span class="p"> </span><span class="f">useRoutes</span><span class="p"> = </span><span class="b1">(</span><span class="v">isAuthenticated</span><span class="b1">)</span><span class="p"> </span><span class="s">=&gt;</span><span class="p"> </span><span class="b1">{</span></div>
<div class="cl" style="top:184.67px"><span class="p">  </span><span class="k">if</span><span class="b2">(</span><span class="v">isAuthenticated</span><span class="b2">)</span><span class="p"> </span><span class="b2">{</span></div>
<div class="cl" style="top:197.33px"><span class="p">    </span><span class="k">return</span><span class="p"> </span><span class="b3">(</span></div>
<div class="cl" style="top:210.00px"><span class="p">      </span><span class="g">&lt;</span><span class="t">Switch</span><span class="g">&gt;</span></div>
<div class="cl" style="top:222.67px"><span class="p">        </span><span class="g">&lt;</span><span class="t">Route</span><span class="p"> </span><span class="v">exact</span><span class="p"> </span><span class="v">path</span><span class="p">=</span><span class="str">"/home"</span><span class="g">&gt;</span></div>
<div class="cl" style="top:235.33px"><span class="p">          </span><span class="g">&lt;</span><span class="t">Home</span><span class="p"> </span><span class="g">/&gt;</span></div>
<div class="cl" style="top:248.00px"><span class="p">        </span><span class="g">&lt;/</span><span class="t">Route</span><span class="g">&gt;</span></div>
<div class="cl" style="top:260.67px"><span class="p">      </span><span class="g">&lt;/</span><span class="t">Switch</span><span class="g">&gt;</span></div>
<div class="cl" style="top:273.33px"><span class="p">    </span><span class="b3">)</span><span class="p">;</span></div>
<div class="cl" style="top:286.00px"><span class="p">  </span><span class="b2">}</span></div>
<div class="cl" style="top:311.33px"><span class="p">  </span><span class="k">return</span><span class="p"> </span><span class="b2">(</span></div>
<div class="cl" style="top:324.00px"><span class="p">    </span><span class="g">&lt;</span><span class="t">Switch</span><span class="g">&gt;</span></div>
<div class="cl" style="top:336.67px"><span class="p">      </span><span class="g">&lt;</span><span class="t">Route</span><span class="p"> </span><span class="v">exact</span><span class="p"> </span><span class="v">path</span><span class="p">=</span><span class="str">"/auth/signup"</span><span class="g">&gt;</span></div>
<div class="cl" style="top:349.33px"><span class="p">        </span><span class="g">&lt;</span><span class="t">SignUpContainer</span><span class="p"> </span><span class="g">/&gt;</span></div>
<div class="cl" style="top:362.00px"><span class="p">      </span><span class="g">&lt;/</span><span class="t">Route</span><span class="g">&gt;</span></div>
<div class="cl" style="top:374.67px"><span class="p">      </span><span class="g">&lt;</span><span class="t">Route</span><span class="p"> </span><span class="v">exact</span><span class="p"> </span><span class="v">path</span><span class="p">=</span><span class="str">"/auth/signin"</span><span class="g">&gt;</span></div>
<div class="cl" style="top:387.33px"><span class="p">        </span><span class="g">&lt;</span><span class="t">SignInContainer</span><span class="p"> </span><span class="g">/&gt;</span></div>
<div class="cl" style="top:400.00px"><span class="p">      </span><span class="g">&lt;/</span><span class="t">Route</span><span class="g">&gt;</span></div>
<div class="cl" style="top:425.33px"><span class="p">      </span><span class="g">&lt;</span><span class="t">Redirect</span><span class="p"> </span><span class="v">to</span><span class="p">=</span><span class="str">"/auth/signup"</span><span class="p"> </span><span class="g">/&gt;</span></div>
<div class="cl" style="top:438.00px"><span class="p">    </span><span class="g">&lt;/</span><span class="t">Switch</span><span class="g">&gt;</span></div>
<div class="cl" style="top:450.67px"><span class="p">  </span><span class="b2">)</span><span class="p">;</span></div>
<div class="cl" style="top:463.33px"><span class="b1">}</span></div></div>
<div id="panel" class="abs"></div>
<div class="abs" style="left:45.2px;top:640.5px;width:34.6px;height:1.2px;background:#e7e7e7"></div>
<div class="abs" style="left:134.2px;top:626.2px;width:11.2px;height:11.2px;border-radius:50%;background:#4d4d4d"></div>
<div class="abs term" style="left:45.5px;top:644px">To ignore, add <span style="color:#3b8eea">//</span> <span style="color:#29b8db">eslint-disable-next-line</span> to the line before.</div>
<div class="abs" style="left:45px;top:665.6px;width:6px;height:11.4px;border:1px solid #cccccc"></div>
<div class="abs" style="left:1048px;top:624px;width:113px;height:15px;background:#3c3c3c"></div>
<svg class="abs" style="left:1040px;top:620px" width="240" height="24" viewBox="1040 620 240 24" fill="none" stroke="#c5c5c5" stroke-width="0.9">
  <path d="M1149.9,630.2 L1152.9,633.2 L1155.9,630.2"/>
  <path d="M1176.9,626.7 V636.3 M1172.1,631.5 H1181.7"/>
  <rect x="1194.6" y="626.6" width="9" height="8.8" stroke-width="1.3"/>
  <path d="M1199.1,626.6 V635.4" stroke-width="1.1"/>
  <path d="M1215.6,628.8 H1223.8 M1218.2,628.8 V627.4 H1221.2 V628.8" stroke="#a58cc0"/><path d="M1216.4,629.4 H1223 V636 H1216.4 Z" fill="#9f88b5" stroke="#b8a6c8" stroke-width="0.6"/>
  <path d="M1238,633.4 L1241.5,629.9 L1245,633.4"/>
  <path d="M1259.6,628.2 L1265.8,634.4 M1265.8,628.2 L1259.6,634.4"/>
</svg>
<div id="status" class="abs"></div>
<svg class="abs" style="left:0;top:678px" width="1280" height="16" viewBox="0 678 1280 16" fill="none" stroke="#ffffff" stroke-width="0.9">
  <circle cx="12.4" cy="682.6" r="1.25"/><circle cx="12.4" cy="689.7" r="1.25"/><circle cx="17.1" cy="684.2" r="1.25"/>
  <path d="M12.4,683.9 V688.4 M17.1,685.5 Q17.1,687.6 12.7,688.6"/>
  <path d="M53.6,688.6 H52.8 Q51.2,688.6 51.2,686.9 Q51.2,685.3 52.9,685.3 Q53.3,683 55.9,683 Q58.4,683 58.8,685.3 Q60.4,685.3 60.4,686.9 Q60.4,688.6 58.8,688.6 H58 M55.8,690.2 V685.8 M54.3,687.2 L55.8,685.7 L57.3,687.2"/>
  <circle cx="76.2" cy="686.1" r="3.7"/>
  <path d="M74.4,684.3 L78,687.9 M78,684.3 L74.4,687.9"/>
  <path d="M94.1,682.2 L98.3,689.9 H89.9 Z M94.1,684.8 V687.3 M94.1,688.2 V688.9"/>
  <circle cx="111.7" cy="686.1" r="3.7"/>
  <path d="M111.7,685.3 V688.4 M111.7,683.8 V684.5"/>
  <path d="M198.3,686 L200.6,688.6 L205,682.8 M248.9,686 L251.2,688.6 L256.2,682.8"/>
  <circle cx="1197" cy="684.6" r="3" fill="#ffffff" stroke="none"/>
  <circle cx="1197" cy="684.6" r="1" fill="#007acc" stroke="none"/>
  <path d="M1197,687.2 V690.6" stroke-width="1.2"/>
  <path d="M1241.6,690.2 L1243.6,686.8 Q1241.8,685.4 1243,682.8 H1250 V686.4 H1246.4 M1244.2,684.4 H1248.4"/>
  <path d="M1262.4,688.4 V685.6 Q1262.4,682.4 1265.1,682.4 Q1267.8,682.4 1267.8,685.6 V688.4 M1261.4,688.6 H1268.8 M1264.2,690 H1266"/>
</svg>
<div id="taskbar" class="abs"></div>
<div class="abs" style="left:31.3px;top:693.3px;width:229.7px;height:26.7px;background:#f2f2f2"></div>
<div class="abs" style="left:328px;top:693.3px;width:31.4px;height:26.7px;background:#4c4c4c"></div>
<div class="abs" style="left:298px;top:718.7px;width:27px;height:1.3px;background:#7fa3c9"></div>
<div class="abs" style="left:328px;top:718.7px;width:31.4px;height:1.3px;background:#8fb0d4"></div>
<div class="abs" style="left:362.5px;top:718.7px;width:28px;height:1.3px;background:#7fa3c9"></div>
<svg class="abs" style="left:0;top:693px" width="1280" height="27" viewBox="0 693 1280 27">
  <path d="M9.6,702.1 L14.9,701.4 V706.4 H9.6 Z M15.7,701.3 L21.8,700.4 V706.4 H15.7 Z M9.6,707.2 H14.9 V712.2 L9.6,711.5 Z M15.7,707.2 H21.8 V713.2 L15.7,712.3 Z" fill="#ffffff"/>
  <circle cx="48.3" cy="704" r="3.6" fill="none" stroke="#333" stroke-width="1"/>
  <path d="M45.6,706.7 L41.2,711.1" stroke="#333" stroke-width="1.1"/>
  <path d="M272.5,701.5 H283 M272.5,712 H283 M274,703.5 H281.5 V710 H274 Z" fill="none" stroke="#e8e8e8" stroke-width="1"/>
  <path d="M303.2,702 H309.5 L311,703.4 H319 V714 H303.2 Z" fill="#e9b93a"/>
  <path d="M303.2,705.4 H319 V714 H303.2 Z" fill="#f7d35d"/>
  <path d="M307.5,709 H314.6 V714 H307.5 Z" fill="#3d8ed8"/>
  <path d="M349.2,699 L353.6,701 V713 L349.2,715 L341.6,708.8 L338.4,711.2 L336.4,710.2 V703.8 L338.4,702.8 L341.6,705.2 Z M349.2,703.2 L344.2,707 L349.2,710.8 Z" fill="#23a0ea" fill-rule="evenodd"/>
  <circle cx="376.5" cy="707" r="7.8" fill="#db4437"/>
  <path d="M376.5,707 L369.75,710.9 A7.8,7.8 0 0 1 376.5,699.2 Z" fill="#db4437"/>
  <path d="M369.75,703.1 A7.8,7.8 0 0 0 376.5,714.8 L380.4,707 Z" fill="#0f9d58"/>
  <path d="M376.5,714.8 A7.8,7.8 0 0 0 383.25,703.1 H376.5 L380.4,707 Z" fill="#ffcd40"/>
  <circle cx="376.5" cy="707" r="3.6" fill="#ffffff"/>
  <circle cx="376.5" cy="707" r="2.8" fill="#4285f4"/>
  <path d="M1134,708.8 L1138,704.8 L1142,708.8" fill="none" stroke="#e8e8e8" stroke-width="1"/>
  <path d="M1151.6,703.9 H1159.8 V709.6 H1151.6 Z M1153.6,711.6 H1158 M1155.8,709.6 V711.6 M1148.6,703 V707.4 M1148.2,703 H1150.2 M1150.2,703 V707.4 M1149.4,707.4 V712" fill="none" stroke="#e8e8e8" stroke-width="1"/>
  <path d="M1164.3,705.4 H1166.3 L1169.3,702.7 V711.3 L1166.3,708.6 H1164.3 Z M1171.3,704.8 Q1172.8,707 1171.3,709.2 M1173.3,703.6 Q1175.6,707 1173.3,710.4" fill="none" stroke="#e8e8e8" stroke-width="0.9"/>
  <path d="M1253.2,701.4 H1266.6 V710.6 H1258 L1255,713.4 V710.6 H1253.2 Z" fill="#e8e8e8"/>
  <path d="M1255.4,703.8 H1264.4 M1255.4,705.9 H1264.4 M1255.4,708 H1261.4" stroke="#2b2b2b" stroke-width="0.9"/>
  <circle cx="1262.9" cy="711.4" r="4.4" fill="#2b2b2b" stroke="#e8e8e8" stroke-width="0.8"/>
  <text x="1262.9" y="713.9" font-family="Liberation Sans" font-size="6.8" fill="#e8e8e8" text-anchor="middle">3</text>
  <path d="M1276.5,693.3 V720" stroke="#5a5a5a" stroke-width="1"/>
</svg>
<svg class="abs" style="left:0;top:0;pointer-events:none;will-change:transform" width="1280" height="720" viewBox="0 0 1280 720">
<text x="28.08" y="13.40" font-family="Liberation Sans" font-size="8.67" fill="#cccccc" stroke="#cccccc" stroke-width="0.12" textLength="14.15" lengthAdjust="spacingAndGlyphs">File</text>
<text x="51.75" y="13.40" font-family="Liberation Sans" font-size="8.67" fill="#cccccc" stroke="#cccccc" stroke-width="0.12" textLength="15.09" lengthAdjust="spacingAndGlyphs">Edit</text>
<text x="76.74" y="13.40" font-family="Liberation Sans" font-size="8.67" fill="#cccccc" stroke="#cccccc" stroke-width="0.12" textLength="35.91" lengthAdjust="spacingAndGlyphs">Selection</text>
<text x="122.11" y="13.40" font-family="Liberation Sans" font-size="8.67" fill="#cccccc" stroke="#cccccc" stroke-width="0.12" textLength="19.13" lengthAdjust="spacingAndGlyphs">View</text>
<text x="151.40" y="13.40" font-family="Liberation Sans" font-size="8.67" fill="#cccccc" stroke="#cccccc" stroke-width="0.12" textLength="11.85" lengthAdjust="spacingAndGlyphs">Go</text>
<text x="173.11" y="13.40" font-family="Liberation Sans" font-size="8.67" fill="#cccccc" stroke="#cccccc" stroke-width="0.12" textLength="15.35" lengthAdjust="spacingAndGlyphs">Run</text>
<text x="199.15" y="13.40" font-family="Liberation Sans" font-size="8.67" fill="#cccccc" stroke="#cccccc" stroke-width="0.12" textLength="32.71" lengthAdjust="spacingAndGlyphs">Terminal</text>
<text x="242.01" y="13.40" font-family="Liberation Sans" font-size="8.67" fill="#cccccc" stroke="#cccccc" stroke-width="0.12" textLength="18.44" lengthAdjust="spacingAndGlyphs">Help</text>
<text x="549.97" y="13.40" font-family="Liberation Sans" font-size="8.67" fill="#cccccc" stroke="#cccccc" stroke-width="0.12" textLength="180.07" lengthAdjust="spacingAndGlyphs">routes.js - irregular-verbs-app - Visual Studio Code</text>
<text x="53.48" y="35.40" font-family="Liberation Sans" font-size="8.67" fill="#969696" stroke="#969696" stroke-width="0.12" textLength="23.79" lengthAdjust="spacingAndGlyphs">App.js</text>
<text x="133.25" y="35.40" font-family="Liberation Sans" font-size="8.67" fill="#ffffff" stroke="#ffffff" stroke-width="0.12" textLength="32.03" lengthAdjust="spacingAndGlyphs">routes.js</text>
<text x="213.33" y="35.40" font-family="Liberation Sans" font-size="8.67" fill="#969696" stroke="#969696" stroke-width="0.12" textLength="45.12" lengthAdjust="spacingAndGlyphs">AuthPage.js</text>
<text x="298.05" y="35.40" font-family="Liberation Sans" font-size="8.67" fill="#969696" stroke="#969696" stroke-width="0.12" textLength="73.76" lengthAdjust="spacingAndGlyphs">SignUpContainer.js</text>
<text x="410.95" y="35.40" font-family="Liberation Sans" font-size="8.67" fill="#969696" stroke="#969696" stroke-width="0.12" textLength="36.81" lengthAdjust="spacingAndGlyphs">SignUp.js</text>
<text x="491.15" y="35.40" font-family="Liberation Sans" font-size="8.67" fill="#969696" stroke="#969696" stroke-width="0.12" textLength="32.95" lengthAdjust="spacingAndGlyphs">SignIn.js</text>
<text x="40.88" y="34.00" font-family="Liberation Sans" font-size="6.3" font-weight="bold" fill="#cbcb41" stroke="#cbcb41" stroke-width="0.3" textLength="8.32" lengthAdjust="spacingAndGlyphs">JS</text>
<text x="120.84" y="34.00" font-family="Liberation Sans" font-size="6.3" font-weight="bold" fill="#cbcb41" stroke="#cbcb41" stroke-width="0.3" textLength="8.99" lengthAdjust="spacingAndGlyphs">JS</text>
<text x="201.06" y="34.00" font-family="Liberation Sans" font-size="6.3" font-weight="bold" fill="#cbcb41" stroke="#cbcb41" stroke-width="0.3" textLength="8.66" lengthAdjust="spacingAndGlyphs">JS</text>
<text x="286.47" y="34.00" font-family="Liberation Sans" font-size="6.3" font-weight="bold" fill="#cbcb41" stroke="#cbcb41" stroke-width="0.3" textLength="8.43" lengthAdjust="spacingAndGlyphs">JS</text>
<text x="399.86" y="34.00" font-family="Liberation Sans" font-size="6.3" font-weight="bold" fill="#cbcb41" stroke="#cbcb41" stroke-width="0.3" textLength="8.54" lengthAdjust="spacingAndGlyphs">JS</text>
<text x="479.55" y="34.00" font-family="Liberation Sans" font-size="6.3" font-weight="bold" fill="#cbcb41" stroke="#cbcb41" stroke-width="0.3" textLength="8.77" lengthAdjust="spacingAndGlyphs">JS</text>
<text x="42.47" y="53.80" font-family="Liberation Sans" font-size="8.67" fill="#a9a9a9" stroke="#a9a9a9" stroke-width="0.12" textLength="21.02" lengthAdjust="spacingAndGlyphs">client</text>
<text x="73.54" y="53.80" font-family="Liberation Sans" font-size="8.67" fill="#a9a9a9" stroke="#a9a9a9" stroke-width="0.12" textLength="12.36" lengthAdjust="spacingAndGlyphs">src</text>
<text x="97.66" y="53.00" font-family="Liberation Sans" font-size="6.3" font-weight="bold" fill="#cbcb41" stroke="#cbcb41" stroke-width="0.3" textLength="8.66" lengthAdjust="spacingAndGlyphs">JS</text>
<text x="109.75" y="53.80" font-family="Liberation Sans" font-size="8.67" fill="#a9a9a9" stroke="#a9a9a9" stroke-width="0.12" textLength="32.23" lengthAdjust="spacingAndGlyphs">routes.js</text>
<text x="167.41" y="53.80" font-family="Liberation Sans" font-size="8.67" fill="#a9a9a9" stroke="#a9a9a9" stroke-width="0.12" textLength="38.82" lengthAdjust="spacingAndGlyphs">useRoutes</text>
<text x="44.51" y="634.70" font-family="Liberation Sans" font-size="7.33" fill="#e7e7e7" stroke="#e7e7e7" stroke-width="0.12" textLength="35.58" lengthAdjust="spacingAndGlyphs">TERMINAL</text>
<text x="92.79" y="634.70" font-family="Liberation Sans" font-size="7.33" fill="#9d9d9d" stroke="#9d9d9d" stroke-width="0.12" textLength="35.66" lengthAdjust="spacingAndGlyphs">PROBLEMS</text>
<text x="137.39" y="634.70" font-family="Liberation Sans" font-size="7.33" fill="#ffffff" stroke="#ffffff" stroke-width="0.12" textLength="4.39" lengthAdjust="spacingAndGlyphs">3</text>
<text x="159.15" y="634.70" font-family="Liberation Sans" font-size="7.33" fill="#9d9d9d" stroke="#9d9d9d" stroke-width="0.12" textLength="28.29" lengthAdjust="spacingAndGlyphs">OUTPUT</text>
<text x="199.88" y="634.70" font-family="Liberation Sans" font-size="7.33" fill="#9d9d9d" stroke="#9d9d9d" stroke-width="0.12" textLength="57.81" lengthAdjust="spacingAndGlyphs">DEBUG CONSOLE</text>
<text x="1053.32" y="635.50" font-family="Liberation Sans" font-size="8.67" fill="#f0f0f0" stroke="#f0f0f0" stroke-width="0.12" textLength="30.55" lengthAdjust="spacingAndGlyphs">1: node</text>
<text x="21.44" y="689.10" font-family="Liberation Sans" font-size="8.0" fill="#ffffff" stroke="#ffffff" stroke-width="0.12" textLength="19.07" lengthAdjust="spacingAndGlyphs">auth*</text>
<text x="82.65" y="689.10" font-family="Liberation Sans" font-size="8.0" fill="#ffffff" stroke="#ffffff" stroke-width="0.12" textLength="4.63" lengthAdjust="spacingAndGlyphs">0</text>
<text x="100.85" y="689.10" font-family="Liberation Sans" font-size="8.0" fill="#ffffff" stroke="#ffffff" stroke-width="0.12" textLength="4.73" lengthAdjust="spacingAndGlyphs">0</text>
<text x="118.22" y="689.10" font-family="Liberation Sans" font-size="8.0" fill="#ffffff" stroke="#ffffff" stroke-width="0.12" textLength="5.17" lengthAdjust="spacingAndGlyphs">3</text>
<text x="133.40" y="689.10" font-family="Liberation Sans" font-size="8.0" fill="#ffffff" stroke="#ffffff" stroke-width="0.12" textLength="50.85" lengthAdjust="spacingAndGlyphs">{..} : Scanning..</text>
<text x="207.90" y="689.10" font-family="Liberation Sans" font-size="8.0" fill="#ffffff" stroke="#ffffff" stroke-width="0.12" textLength="33.72" lengthAdjust="spacingAndGlyphs">javascript</text>
<text x="243.69" y="689.10" font-family="Liberation Sans" font-size="8.0" fill="#ffffff" stroke="#ffffff" stroke-width="0.12" textLength="2.08" lengthAdjust="spacingAndGlyphs">|</text>
<text x="259.09" y="689.10" font-family="Liberation Sans" font-size="8.0" fill="#ffffff" stroke="#ffffff" stroke-width="0.12" textLength="30.04" lengthAdjust="spacingAndGlyphs">routes.js</text>
<text x="965.67" y="689.10" font-family="Liberation Sans" font-size="8.0" fill="#ffffff" stroke="#ffffff" stroke-width="0.12" textLength="45.75" lengthAdjust="spacingAndGlyphs">Ln 23, Col 40</text>
<text x="1021.83" y="689.10" font-family="Liberation Sans" font-size="8.0" fill="#ffffff" stroke="#ffffff" stroke-width="0.12" textLength="32.67" lengthAdjust="spacingAndGlyphs">Spaces: 2</text>
<text x="1065.25" y="689.10" font-family="Liberation Sans" font-size="8.0" fill="#ffffff" stroke="#ffffff" stroke-width="0.12" textLength="21.40" lengthAdjust="spacingAndGlyphs">UTF-8</text>
<text x="1096.74" y="689.10" font-family="Liberation Sans" font-size="8.0" fill="#ffffff" stroke="#ffffff" stroke-width="0.12" textLength="17.52" lengthAdjust="spacingAndGlyphs">CRLF</text>
<text x="1125.17" y="689.10" font-family="Liberation Sans" font-size="8.0" fill="#ffffff" stroke="#ffffff" stroke-width="0.12" textLength="56.85" lengthAdjust="spacingAndGlyphs">Babel JavaScript</text>
<text x="1203.62" y="689.10" font-family="Liberation Sans" font-size="8.0" fill="#ffffff" stroke="#ffffff" stroke-width="0.12" textLength="26.56" lengthAdjust="spacingAndGlyphs">Go Live</text>
<text x="58.59" y="710.80" font-family="Liberation Sans" font-size="10.0" fill="#4c4c4c" stroke="#4c4c4c" stroke-width="0.12" textLength="85.58" lengthAdjust="spacingAndGlyphs">Type here to search</text>
<text x="1181.23" y="709.50" font-family="Liberation Sans" font-size="8.3" fill="#e8e8e8" stroke="#e8e8e8" stroke-width="0.12" textLength="16.59" lengthAdjust="spacingAndGlyphs">ENG</text>
<text x="1209.24" y="703.40" font-family="Liberation Sans" font-size="8.3" fill="#e8e8e8" stroke="#e8e8e8" stroke-width="0.12" textLength="28.14" lengthAdjust="spacingAndGlyphs">6:34 PM</text>
<text x="1203.59" y="715.40" font-family="Liberation Sans" font-size="8.3" fill="#e8e8e8" stroke="#e8e8e8" stroke-width="0.12" textLength="39.50" lengthAdjust="spacingAndGlyphs">12/17/2020</text>
</svg>
</body></html>
